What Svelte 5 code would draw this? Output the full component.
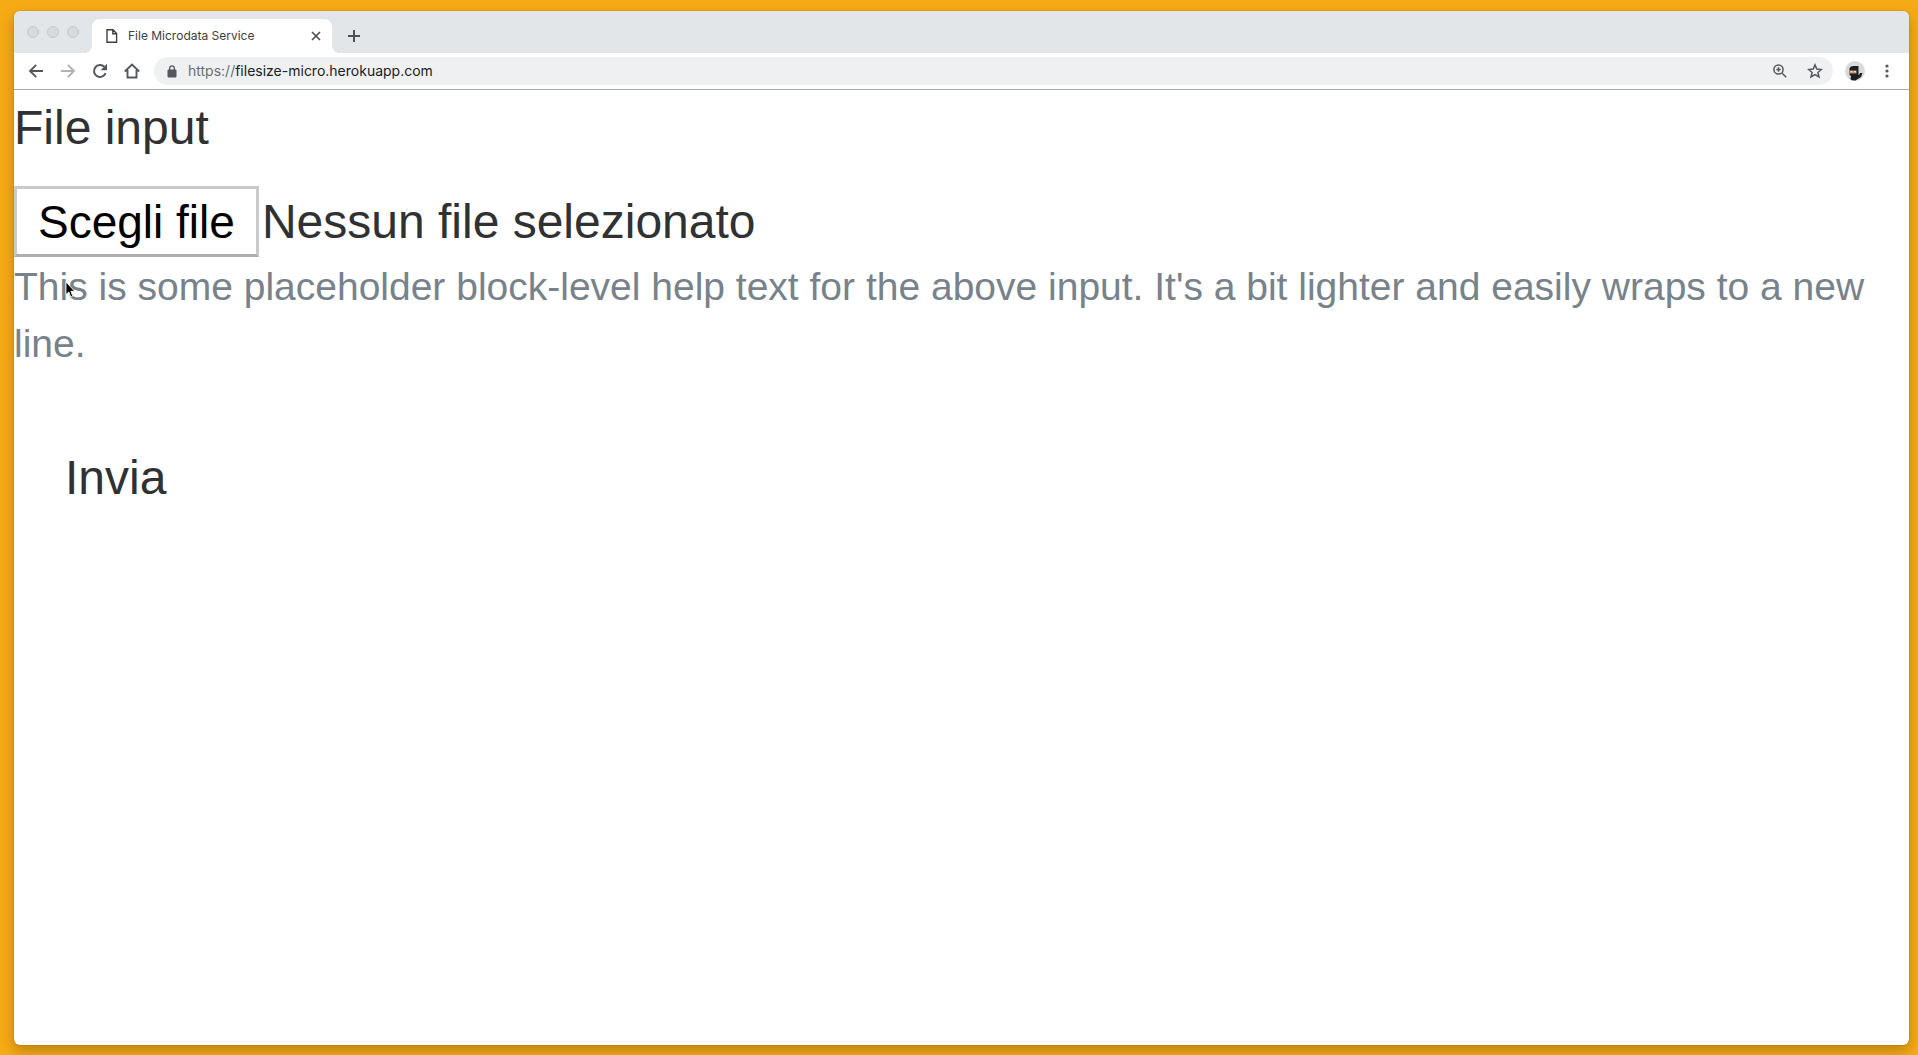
<script lang="ts">
  let fileName = $state('Nessun file selezionato');

  function pick(event: Event) {
    const input = event.currentTarget as HTMLInputElement;
    fileName = input.files?.[0]?.name ?? 'Nessun file selezionato';
  }
</script>

<div class="desktop">
  <div class="window">
    <header class="tabstrip">
      <div class="lights" aria-hidden="true"><i></i><i></i><i></i></div>
      <div class="tab">
        <svg class="page-icon" width="12" height="16" viewBox="0 0 12 16" aria-hidden="true">
          <path d="M1 1.7h6l3.6 3.8v8.8H1z M6.8 1.7v4h3.8" fill="none" stroke="#3c4043" stroke-width="1.4" />
        </svg>
        <span class="tab-title">File Microdata Service</span>
        <button class="plain" aria-label="Close tab">
          <svg width="12" height="12" viewBox="0 0 12 12"><path d="M2 2l8 8M10 2l-8 8" stroke="#4d5156" stroke-width="1.7" /></svg>
        </button>
      </div>
      <button class="plain new-tab" aria-label="New tab">
        <svg width="14" height="14" viewBox="0 0 14 14"><path d="M7 1v12M1 7h12" stroke="#4d5156" stroke-width="2" /></svg>
      </button>
    </header>

    <nav class="toolbar">
      <button class="plain" aria-label="Back">
        <svg width="16" height="16" viewBox="0 0 16 16"><path d="M15 8H2.5M8.2 1.8L2 8l6.2 6.2" fill="none" stroke="#54585d" stroke-width="1.9" /></svg>
      </button>
      <button class="plain" aria-label="Forward">
        <svg width="16" height="16" viewBox="0 0 16 16"><path d="M1 8h12.5M7.8 1.8L14 8l-6.2 6.2" fill="none" stroke="#b0b2b4" stroke-width="1.9" /></svg>
      </button>
      <button class="plain" aria-label="Reload">
        <svg width="16" height="16" viewBox="0 0 16 16">
          <path d="M13.6 10.2A6 6 0 1 1 12.3 3.8" fill="none" stroke="#54585d" stroke-width="2" />
          <path d="M15 .8v6.400H8.600z" fill="#54585d" />
        </svg>
      </button>
      <button class="plain" aria-label="Home">
        <svg width="16" height="16" viewBox="0 0 16 16"><path d="M.8 8.500L8 1.600l7.200 6.900M3.500 7v7.500h9V7" fill="none" stroke="#54585d" stroke-width="1.9" /></svg>
      </button>
      <div class="omnibox">
        <svg width="10" height="13" viewBox="0 0 10 13" aria-hidden="true">
          <path d="M1 5h8v7H1z" fill="#54585d" stroke="#54585d" stroke-linejoin="round" />
          <path d="M2.700 5V3.200a2.300 2.300 0 0 1 4.600 0V5" fill="none" stroke="#54585d" stroke-width="1.3" />
        </svg>
        <a class="url" href="https://filesize-micro.herokuapp.com"><span>https://</span>filesize-micro.herokuapp.com</a>
        <button class="plain" aria-label="Zoom">
          <svg width="14" height="14" viewBox="0 0 14 14"><path d="M9.200 9.200L13.200 13.200M5.500 3.300v4.400M3.300 5.500h4.400" stroke="#54585d" stroke-width="1.5" /><circle cx="5.5" cy="5.5" r="4.6" fill="none" stroke="#54585d" stroke-width="1.5" /></svg>
        </button>
        <button class="plain" aria-label="Bookmark">
          <svg width="16" height="16" viewBox="0 0 16 16"><path d="M8 1.900l1.800 4.200 4.600.4-3.500 3 1.100 4.500L8 11.600 4 14l1.100-4.500-3.500-3 4.600-.4z" fill="none" stroke="#54585d" stroke-width="1.5" /></svg>
        </button>
      </div>
      <button class="plain" aria-label="Profile">
        <svg width="20" height="20" viewBox="0 0 20 20">
          <circle cx="10" cy="10" r="10" fill="#d9dadb" />
          <path d="M4.500 7q1-2 4-2h5v9q1 0 1.500-2h2.500l-1.500 4-5.500 3.500q-4 .5-5-1.500l.5-3-1.500-1z" fill="#1c1f22" />
          <path d="M4.500 9.500h7v3h-7z" fill="#d08b5e" />
          <path d="M5.500 10.300h2v1h-2zM9 10.300h2v1H9z" fill="#fff" />
        </svg>
      </button>
      <button class="plain menu" aria-label="Menu">
        <svg width="4" height="14" viewBox="0 0 4 14"><g fill="#54585d"><circle cx="2" cy="2" r="1.6" /><circle cx="2" cy="7" r="1.6" /><circle cx="2" cy="12" r="1.6" /></g></svg>
      </button>
    </nav>

    <main>
      <form onsubmit={(e) => e.preventDefault()}>
        <label class="title" for="upload">File input</label>
        <div class="file-row">
          <input id="upload" type="file" aria-describedby="help" onchange={pick} />
          <label class="choose" for="upload">Scegli file</label>
          <span>{fileName}</span>
        </div>
        <small id="help">This is some placeholder block-level help text for the above input. It's a bit lighter and easily wraps to a new line.</small>
        <button class="submit" type="submit">Invia</button>
      </form>
    </main>
  </div>

  <svg class="cursor" width="12" height="18" viewBox="0 0 12 18" aria-hidden="true">
    <path d="M1 1v12.500l2.800-2.500 2 4.800 2-.8-2-4.700h3.900z" fill="#000" stroke="#fff" stroke-width=".8" />
  </svg>
</div>

<style>
  :global(body) {
    margin: 0;
  }
  .desktop {
    position: relative;
    box-sizing: border-box;
    min-height: 100vh;
    padding: 11px 9px 10px 14px;
    display: flex;
    background: #f6aa15;
    overflow: hidden;
  }
  .window {
    flex: 1;
    min-width: 0;
    display: flex;
    flex-direction: column;
    border-radius: 6px;
    background: #fff;
    overflow: hidden;
    box-shadow: 0 0 1px rgba(0, 0, 0, 0.5), 0 6px 14px rgba(0, 0, 0, 0.24);
  }
  .plain {
    display: flex;
    padding: 0;
    border: 0;
    background: none;
  }
  .tabstrip {
    display: flex;
    align-items: flex-end;
    height: 42px;
    background: #e2e6e9;
  }
  .lights {
    display: flex;
    gap: 8px;
    padding: 0 13px 15px 13px;
  }
  .lights i {
    box-sizing: border-box;
    width: 12px;
    height: 12px;
    border: 1px solid #c6c8ca;
    border-radius: 50%;
    background: #d8d9da;
  }
  .tab {
    position: relative;
    box-sizing: border-box;
    display: flex;
    align-items: center;
    width: 240px;
    height: 34px;
    padding: 0 10px 0 14px;
    border-radius: 8px 8px 0 0;
    background: #fff;
    font: 12px/16px Inter, sans-serif;
    color: #3c4043;
  }
  .tab::before,
  .tab::after {
    content: '';
    position: absolute;
    bottom: 0;
    width: 8px;
    height: 8px;
  }
  .tab::before {
    right: 100%;
    background: radial-gradient(circle at 0 0, transparent 8px, #fff 8px);
  }
  .tab::after {
    left: 100%;
    background: radial-gradient(circle at 100% 0, transparent 8px, #fff 8px);
  }
  .tab-title {
    flex: 1;
    padding-left: 10px;
    white-space: nowrap;
  }
  .new-tab {
    padding: 0 15px 10px;
  }
  .toolbar {
    display: flex;
    align-items: center;
    gap: 16px;
    height: 36px;
    padding: 0 18px 0 14px;
    border-bottom: 1px solid #a9a9ab;
  }
  .omnibox {
    flex: 1;
    display: flex;
    align-items: center;
    gap: 20px;
    height: 28px;
    margin: 0 -4px 0 -2px;
    padding: 0 10px 0 13px;
    border-radius: 14px;
    background: #eff0f2;
  }
  .url {
    flex: 1;
    margin-left: -9px;
    font: 14px/20px Inter, sans-serif;
    color: #202124;
    text-decoration: none;
  }
  .url span {
    color: #6b6f74;
  }
  .menu {
    padding: 0 2px 0 4px;
  }
  main {
    flex: 1;
    padding-top: 2px;
    font: 48px/72px 'Liberation Sans', Arial, sans-serif;
    color: #2f3133;
  }
  form {
    display: flex;
    flex-direction: column;
    align-items: flex-start;
  }
  .title {
    margin-bottom: 22px;
  }
  .file-row {
    position: relative;
    display: flex;
    align-items: center;
    gap: 3px;
    height: 71px;
  }
  .file-row input {
    position: absolute;
    width: 1px;
    height: 1px;
    opacity: 0;
  }
  .choose {
    padding: 1px 21px 0;
    border: 3px solid #c8cacc;
    border-bottom-color: #adafb0;
    font-size: 46px;
    line-height: 64px;
    color: #000;
  }
  small {
    margin-top: 1px;
    font-size: 39px;
    line-height: 57px;
    color: #78828a;
  }
  .submit {
    margin-top: 52px;
    padding: 18px 51px;
    border: 0;
    background: none;
    font: inherit;
    color: inherit;
  }
  .cursor {
    position: absolute;
    left: 65px;
    top: 281px;
  }
</style>
